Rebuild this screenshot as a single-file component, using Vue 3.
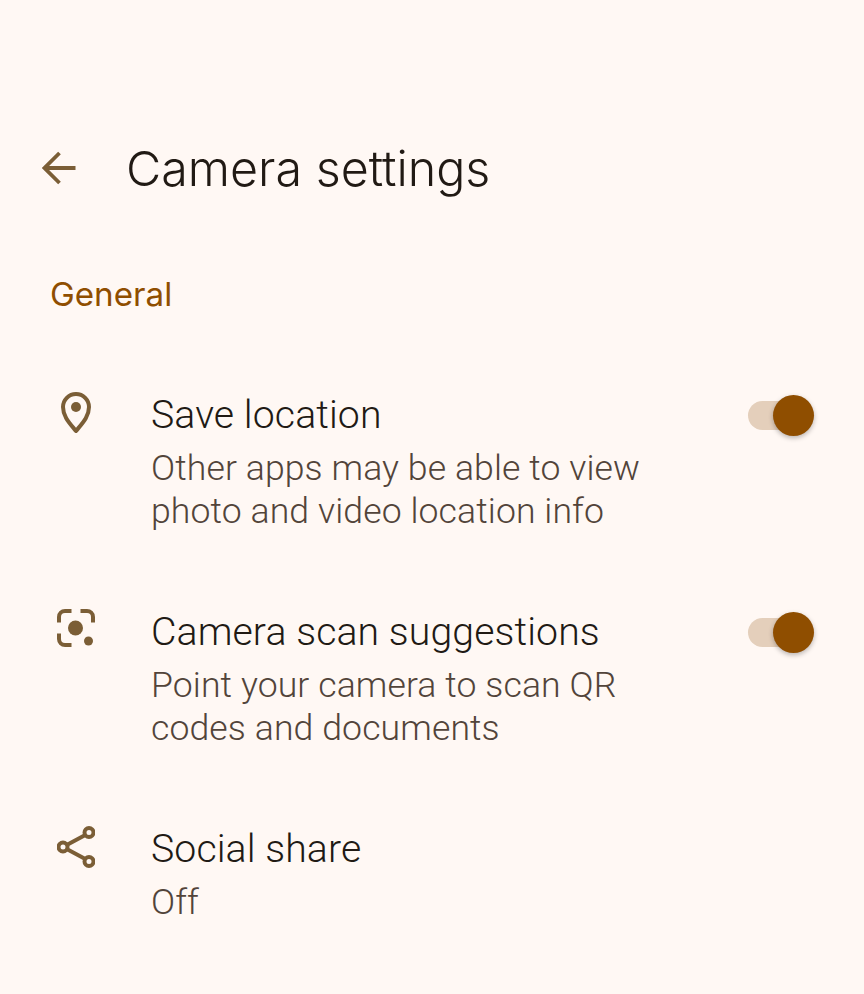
<template>
	<div class="screen">
		<header class="appbar">
			<svg class="back" width="34" height="34" viewBox="0 0 34 34">
				<path d="M33.5 17H3M17.5 2 2.5 17l15 15" fill="none" stroke="#7b5e36" stroke-width="3.8" />
			</svg>
			<h1>Camera settings</h1>
		</header>

		<h2 class="section">General</h2>

		<div v-for="item in items" :key="item.title" class="row">
			<div class="icon">
				<svg v-if="item.icon === 'pin'" width="38" height="42" viewBox="0 0 38 42">
					<path d="M19 39C12.500 31 6 24.500 6 15a13 13 0 0 1 26 0C32 24.500 25.500 31 19 39Z" fill="none" stroke="#7b5e36" stroke-width="4" stroke-linejoin="round" />
					<circle cx="19" cy="15" r="5" fill="#7b5e36" />
				</svg>
				<svg v-else-if="item.icon === 'scan'" width="38" height="38" viewBox="0 0 38 38">
					<path d="M14.500 2H8a6 6 0 0 0-6 6v5.500M23.500 2H30a6 6 0 0 1 6 6v5.500M2 24.500V30a6 6 0 0 0 6 6h6.500" fill="none" stroke="#7b5e36" stroke-width="4" />
					<circle cx="18.500" cy="19" r="7.500" fill="#7b5e36" />
					<circle cx="31.500" cy="32" r="4.500" fill="#7b5e36" />
				</svg>
				<svg v-else width="38" height="42" viewBox="0 0 38 42">
					<path d="M32 7 6 21l26 14" fill="none" stroke="#7b5e36" stroke-width="4" />
					<circle cx="32" cy="6.500" r="4.500" fill="#fff8f4" stroke="#7b5e36" stroke-width="4" />
					<circle cx="6" cy="21" r="4.500" fill="#fff8f4" stroke="#7b5e36" stroke-width="4" />
					<circle cx="32" cy="35.500" r="4.500" fill="#fff8f4" stroke="#7b5e36" stroke-width="4" />
				</svg>
			</div>
			<div class="text">
				<div class="title">{{ item.title }}</div>
				<div class="summary">{{ item.summary[0] }}<br v-if="item.summary[1]" />{{ item.summary[1] }}</div>
			</div>
			<div v-if="item.toggle" class="toggle"><span class="thumb"></span></div>
		</div>
	</div>
</template>

<script setup>
const items = [
	{ icon: 'pin', title: 'Save location', summary: ['Other apps may be able to view', 'photo and video location info'], toggle: true },
	{ icon: 'scan', title: 'Camera scan suggestions', summary: ['Point your camera to scan QR', 'codes and documents'], toggle: true },
	{ icon: 'share', title: 'Social share', summary: ['Off'], toggle: false },
];
</script>

<style scoped>
.screen {
	width: 864px;
	height: 994px;
	overflow: hidden;
	background: #fff8f4;
	font-family: Inter, Roboto, "Liberation Sans", sans-serif;
	color: #211a14;
}

.appbar {
	display: flex;
	align-items: center;
	height: 56px;
	padding: 140px 0 0 42px;
}

.back {
	flex: none;
	margin-right: 50px;
}

h1 {
	margin: 0;
	font-size: 48.4px;
	font-weight: 300;
	white-space: nowrap;
}

.section {
	margin: 0;
	padding: 76px 0 0 50px;
	font-size: 33.2px;
	line-height: 44px;
	font-weight: 400;
	color: #8f4e00;
}

.row {
	display: flex;
	align-items: flex-start;
	height: 217px;
	padding-left: 57px;
}

.section + .row {
	margin-top: 78px;
}

.icon {
	flex: none;
	width: 94px;
	height: 42px;
	margin-top: -2px;
}

.text {
	flex: 1;
	font-family: Roboto, "Liberation Sans", sans-serif;
	font-weight: 300;
	letter-spacing: 0.1px;
}

.title {
	font-size: 39.2px;
	line-height: 44px;
	margin-top: -1px;
}

.summary {
	font-size: 35.6px;
	line-height: 43px;
	margin-top: 10px;
	color: #52443a;
}

.toggle {
	position: relative;
	flex: none;
	width: 52px;
	height: 29px;
	margin: 7px 64px 0 0;
	border-radius: 15px;
	background: #e4cfbb;
}

.thumb {
	position: absolute;
	left: 25px;
	top: -6px;
	width: 41px;
	height: 41px;
	border-radius: 50%;
	background: #8f4e00;
	box-shadow: 0 2px 5px rgba(0, 0, 0, 0.28);
}
</style>

<style>
body {
	background: #fff8f4;
}
</style>
